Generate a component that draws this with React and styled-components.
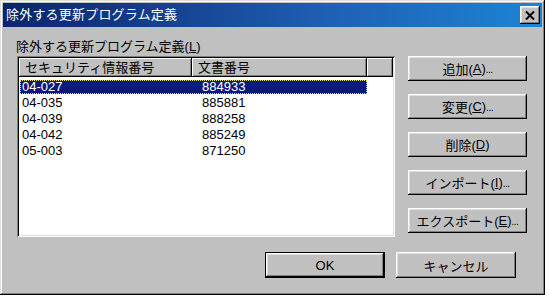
import React from 'react';
import styled, { createGlobalStyle } from 'styled-components';

const GlobalStyle = createGlobalStyle`
  html, body {
    margin: 0;
    padding: 0;
    background: #ffffff;
  }
  body {
    font-family: "Liberation Sans", "Noto Sans CJK JP", sans-serif;
    font-size: 13px;
    color: #000;
  }
`;

const Window = styled.div`
  width: 545px;
  height: 295px;
  box-sizing: border-box;
  padding: 3px;
  background: #c0c0c0;
  box-shadow: inset -1px -1px #000, inset 1px 1px #dfdfdf,
    inset -2px -2px #808080, inset 2px 2px #ffffff;
  display: flex;
  flex-direction: column;
`;

const TitleBar = styled.div`
  height: 24px;
  display: flex;
  align-items: center;
  justify-content: space-between;
  padding: 0 2px 0 3px;
  background: linear-gradient(to right, #0a246a 0%, #1f5fb4 60%, #1c84d4 100%);
  color: #fff;
`;

const TitleText = styled.span`
  font-size: 13px;
  line-height: 16px;
  letter-spacing: 0.2px;
`;

const CloseButton = styled.div`
  width: 20px;
  height: 18px;
  box-sizing: border-box;
  background: #c0c0c0;
  display: flex;
  align-items: center;
  justify-content: center;
  box-shadow: inset -1px -1px #000, inset 1px 1px #fff,
    inset -2px -2px #808080, inset 2px 2px #dfdfdf;
`;

const Body = styled.div`
  flex: 1;
  padding: 10px 15px 0 14px;
  display: flex;
  flex-direction: column;
`;

const MainRow = styled.div`
  display: flex;
  gap: 13px;
`;

const LeftColumn = styled.div`
  width: 378px;
  display: flex;
  flex-direction: column;
`;

const Label = styled.div`
  height: 19px;
  line-height: 19px;
  margin-left: -1px;
  white-space: nowrap;
`;

const ListBox = styled.div`
  height: 181px;
  box-sizing: border-box;
  padding: 2px;
  background: #fff;
  box-shadow: inset 1px 1px #808080, inset -1px -1px #fff,
    inset 2px 2px #000, inset -2px -2px #dfdfdf;
  overflow: hidden;
`;

const HeaderRow = styled.div`
  display: flex;
  height: 19px;
`;

const HeaderCell = styled.div`
  width: ${(p) => p.$width};
  flex: ${(p) => (p.$fill ? '1' : 'none')};
  box-sizing: border-box;
  background: #c0c0c0;
  padding-left: 6px;
  line-height: 19px;
  white-space: nowrap;
  box-shadow: inset -1px -1px #000, inset 1px 1px #fff,
    inset -2px -2px #808080;
`;

const Rows = styled.div`
  padding-top: 2px;
`;

const Row = styled.div`
  display: flex;
  height: 16px;
  align-items: center;
`;

const Cells = styled.div`
  display: flex;
  width: 347px;
  height: 14px;
  margin-left: 1px;
  box-sizing: border-box;
  background: ${(p) => (p.$selected ? '#0a1a7a' : 'transparent')};
  color: ${(p) => (p.$selected ? '#fff' : '#000')};
  outline: ${(p) => (p.$selected ? '1px dotted #e8e070' : 'none')};
  outline-offset: -1px;
`;

const Cell = styled.div`
  width: ${(p) => p.$width};
  padding-left: 2px;
  line-height: 14px;
  white-space: nowrap;
`;

const ButtonColumn = styled.div`
  width: 119px;
  padding-top: 19px;
  display: flex;
  flex-direction: column;
  gap: 13px;
`;

const Button = styled.div`
  width: ${(p) => p.$width || '119px'};
  height: ${(p) => p.$height || '25px'};
  box-sizing: border-box;
  display: flex;
  align-items: center;
  justify-content: center;
  background: #c0c0c0;
  white-space: nowrap;
  box-shadow: ${(p) =>
    p.$default
      ? 'inset 0 0 0 1px #000, inset -2px -2px #000, inset 2px 2px #fff, inset -3px -3px #808080, inset 3px 3px #dfdfdf'
      : 'inset -1px -1px #000, inset 1px 1px #fff, inset -2px -2px #808080, inset 2px 2px #dfdfdf'};

  u {
    text-decoration-thickness: 1px;
    text-underline-offset: 1px;
  }
`;

const Dots = styled.span`
  font-size: 10px;
  letter-spacing: -0.5px;
  align-self: flex-end;
  margin-bottom: 6px;
`;

const BottomRow = styled.div`
  display: flex;
  justify-content: flex-end;
  gap: 11px;
  margin-top: 15px;
  padding-right: 11px;
`;

const rows = [
  ['04-027', '884933'],
  ['04-035', '885881'],
  ['04-039', '888258'],
  ['04-042', '885249'],
  ['05-003', '871250'],
];

const CloseIcon = () => (
  <svg width="10" height="9" viewBox="0 0 10 9">
    <path d="M1 0.5 L9 8.5 M9 0.5 L1 8.5" stroke="#000" strokeWidth="2" />
  </svg>
);

const App = () => (
  <>
    <GlobalStyle />
    <Window>
      <TitleBar>
        <TitleText>除外する更新プログラム定義</TitleText>
        <CloseButton>
          <CloseIcon />
        </CloseButton>
      </TitleBar>
      <Body>
        <MainRow>
          <LeftColumn>
            <Label>
              除外する更新プログラム定義(<u>L</u>)
            </Label>
            <ListBox>
              <HeaderRow>
                <HeaderCell $width="173px">セキュリティ情報番号</HeaderCell>
                <HeaderCell $width="175px">文書番号</HeaderCell>
                <HeaderCell $fill />
              </HeaderRow>
              <Rows>
                {rows.map(([id, doc], i) => (
                  <Row key={id}>
                    <Cells $selected={i === 0}>
                      <Cell $width="178px">{id}</Cell>
                      <Cell $width="160px">{doc}</Cell>
                    </Cells>
                  </Row>
                ))}
              </Rows>
            </ListBox>
          </LeftColumn>
          <ButtonColumn>
            <Button>
              追加(<u>A</u>)<Dots>...</Dots>
            </Button>
            <Button>
              変更(<u>C</u>)<Dots>...</Dots>
            </Button>
            <Button>
              削除(<u>D</u>)
            </Button>
            <Button>
              インポート(<u>I</u>)<Dots>...</Dots>
            </Button>
            <Button>
              エクスポート(<u>E</u>)<Dots>...</Dots>
            </Button>
          </ButtonColumn>
        </MainRow>
        <BottomRow>
          <Button $width="120px" $height="26px" $default>
            OK
          </Button>
          <Button $width="120px" $height="26px">
            キャンセル
          </Button>
        </BottomRow>
      </Body>
    </Window>
  </>
);

export default App;
